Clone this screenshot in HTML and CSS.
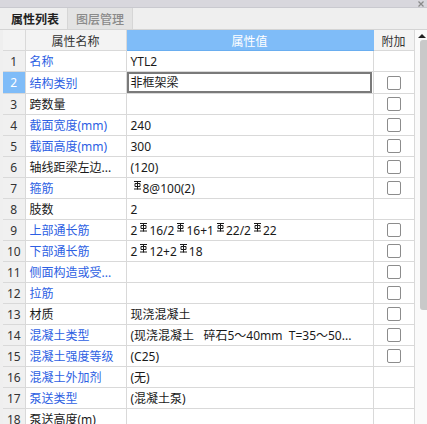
FILE: index.html
```html
<!DOCTYPE html>
<html>
<head>
<meta charset="utf-8">
<link rel="stylesheet" href="styles.css">
</head>
<body>
<div class="window">
  <div class="titlebar"><svg class="close" viewBox="0 0 6 6"><path d="M0.5 0.5L5.5 5.5M5.5 0.5L0.5 5.5"/></svg></div>
  <div class="tabs">
    <div class="tab active">属性列表</div>
    <div class="tab">图层管理</div>
  </div>
  <div class="body">
    <table class="grid">
      <colgroup><col class="c-num"><col class="c-name"><col class="c-val"><col class="c-ext"></colgroup>
      <thead>
        <tr><th class="num"></th><th class="name">属性名称</th><th class="val">属性值</th><th class="ext">附加</th></tr>
      </thead>
      <tbody>
        <tr><td class="num">1</td><td class="name blue">名称</td><td class="val">YTL2</td><td class="ext"></td></tr>
        <tr class="sel"><td class="num">2</td><td class="name blue">结构类别</td><td class="val edit"><div class="editbox">非框架梁</div></td><td class="ext"><span class="cb"></span></td></tr>
        <tr><td class="num">3</td><td class="name">跨数量</td><td class="val"></td><td class="ext"><span class="cb"></span></td></tr>
        <tr><td class="num">4</td><td class="name blue">截面宽度(mm)</td><td class="val">240</td><td class="ext"><span class="cb"></span></td></tr>
        <tr><td class="num">5</td><td class="name blue">截面高度(mm)</td><td class="val">300</td><td class="ext"><span class="cb"></span></td></tr>
        <tr><td class="num">6</td><td class="name">轴线距梁左边...</td><td class="val">(120)</td><td class="ext"><span class="cb"></span></td></tr>
        <tr><td class="num">7</td><td class="name blue">箍筋</td><td class="val"><svg class="rb" viewBox="0 0 8 9"><path d="M0.5 0.5H7.5M4 0.5V8.5M1.5 2.5H6.5V5.5H1.5ZM0.5 8H7.5"/></svg>8@100(2)</td><td class="ext"><span class="cb"></span></td></tr>
        <tr><td class="num">8</td><td class="name">肢数</td><td class="val">2</td><td class="ext"></td></tr>
        <tr><td class="num">9</td><td class="name blue">上部通长筋</td><td class="val">2<svg class="rb" viewBox="0 0 8 9"><path d="M0.5 0.5H7.5M4 0.5V8.5M1.5 2.5H6.5V5.5H1.5ZM0.5 8H7.5"/></svg>16/2<svg class="rb" viewBox="0 0 8 9"><path d="M0.5 0.5H7.5M4 0.5V8.5M1.5 2.5H6.5V5.5H1.5ZM0.5 8H7.5"/></svg>16+1<svg class="rb" viewBox="0 0 8 9"><path d="M0.5 0.5H7.5M4 0.5V8.5M1.5 2.5H6.5V5.5H1.5ZM0.5 8H7.5"/></svg>22/2<svg class="rb" viewBox="0 0 8 9"><path d="M0.5 0.5H7.5M4 0.5V8.5M1.5 2.5H6.5V5.5H1.5ZM0.5 8H7.5"/></svg>22</td><td class="ext"><span class="cb"></span></td></tr>
        <tr><td class="num">10</td><td class="name blue">下部通长筋</td><td class="val">2<svg class="rb" viewBox="0 0 8 9"><path d="M0.5 0.5H7.5M4 0.5V8.5M1.5 2.5H6.5V5.5H1.5ZM0.5 8H7.5"/></svg>12+2<svg class="rb" viewBox="0 0 8 9"><path d="M0.5 0.5H7.5M4 0.5V8.5M1.5 2.5H6.5V5.5H1.5ZM0.5 8H7.5"/></svg>18</td><td class="ext"><span class="cb"></span></td></tr>
        <tr><td class="num">11</td><td class="name blue">侧面构造或受...</td><td class="val"></td><td class="ext"><span class="cb"></span></td></tr>
        <tr><td class="num">12</td><td class="name blue">拉筋</td><td class="val"></td><td class="ext"><span class="cb"></span></td></tr>
        <tr><td class="num">13</td><td class="name">材质</td><td class="val">现浇混凝土</td><td class="ext"><span class="cb"></span></td></tr>
        <tr><td class="num">14</td><td class="name blue">混凝土类型</td><td class="val">(现浇混凝土&nbsp;&nbsp;&nbsp;碎石5～40mm&nbsp;&nbsp;T=35～50...</td><td class="ext"><span class="cb"></span></td></tr>
        <tr><td class="num">15</td><td class="name blue">混凝土强度等级</td><td class="val">(C25)</td><td class="ext"><span class="cb"></span></td></tr>
        <tr><td class="num">16</td><td class="name blue">混凝土外加剂</td><td class="val">(无)</td><td class="ext"></td></tr>
        <tr><td class="num">17</td><td class="name blue">泵送类型</td><td class="val">(混凝土泵)</td><td class="ext"></td></tr>
        <tr><td class="num">18</td><td class="name">泵送高度(m)</td><td class="val"></td><td class="ext"></td></tr>
      </tbody>
    </table>
    <div class="scrollbar">
      <div class="arrow"></div>
      <div class="thumb"></div>
    </div>
  </div>
</div>
</body>
</html>
```
FILE: styles.css
```css
html, body {
  margin: 0;
  padding: 0;
  background: #efefef;
}
body {
  font-family: "Noto Sans", "Noto Sans CJK SC", sans-serif;
  font-size: 12px;
  color: #1a1a1a;
}
.window {
  width: 427px;
  height: 424px;
  overflow: hidden;
  background: #efefef;
}
.titlebar {
  height: 7px;
  background: #d8d7dd;
  border-bottom: 1px solid #c9c9cf;
  display: flex;
  justify-content: flex-end;
  align-items: flex-start;
}
.close {
  width: 6px;
  height: 6px;
  margin: 1px 3px 0 0;
  fill: none;
  stroke: #8a8a8a;
  stroke-width: 1.2;
}
.tabs {
  height: 21px;
  display: flex;
  padding-left: 3px;
  border-bottom: 1px solid #d4d4d4;
  background: #efefef;
}
.tab {
  width: 64px;
  border-right: 1px solid #d6d6d6;
  display: flex;
  align-items: center;
  justify-content: center;
  font-family: "Noto Sans CJK SC", sans-serif;
  font-size: 12px;
  font-weight: 500;
  color: #8a8a8a;
  background: #e3e3e3;
}
.tab.active {
  color: #222;
  background: #efefef;
  font-weight: 700;
}
.body {
  display: flex;
  padding-left: 3px;
}
.grid {
  width: 411px;
  table-layout: fixed;
  border-collapse: collapse;
  background: #fff;
}
.c-num { width: 22px; }
.c-name { width: 101px; }
.c-val { width: 247px; }
.c-ext { width: 41px; }
.grid th, .grid td {
  height: 20px;
  padding: 0;
  border: 1px solid #d9d9d9;
  border-top: none;
  white-space: nowrap;
  overflow: hidden;
  font-weight: normal;
}
.grid th {
  background: #f3f3f3;
  color: #333;
  text-align: center;
  font-family: "Noto Sans CJK SC", sans-serif;
}
.grid th.val {
  background: #7fbcf8;
  color: #fff;
  border-color: #7fbcf8;
  border-bottom-color: #6aaef0;
}
.grid th.num { border-left: none; }
.grid td.num {
  background: #f0f0f0;
  text-align: center;
  color: #333;
  border-left: none;
}
.grid tr.sel td.num {
  background: #7fbcf8;
  color: #fff;
}
.grid td.name {
  padding-left: 4px;
}
.grid td.name.blue { color: #2d5fe3; }
.grid td.val {
  padding-left: 4px;
}
.grid td.val.edit {
  padding: 0;
}
.editbox {
  height: 17px;
  border: 2px solid #7a7a7a;
  padding-left: 2px;
  line-height: 17px;
  margin-right: 1px;
}
.rb {
  width: 9px;
  height: 9px;
  vertical-align: 3px;
  margin: 0 1px 0 2px;
  fill: none;
  stroke: #1a1a1a;
  stroke-width: 1;
}
.grid td.ext {
  text-align: center;
  line-height: 0;
}
.cb {
  display: inline-block;
  width: 12px;
  height: 12px;
  border: 1px solid #8c8c8c;
  border-radius: 2px;
  background: #fff;
}
.scrollbar {
  width: 13px;
  height: 394px;
  background: #fafafa;
}
.arrow {
  width: 0;
  height: 0;
  margin: 4px 0 0 3px;
  border-left: 4px solid transparent;
  border-right: 4px solid transparent;
  border-bottom: 4px solid #222;
}
.thumb {
  margin: 2px 0 0 5px;
  width: 8px;
  height: 270px;
  background: #c9c9c9;
  border-radius: 3px 0 0 3px;
}
```
